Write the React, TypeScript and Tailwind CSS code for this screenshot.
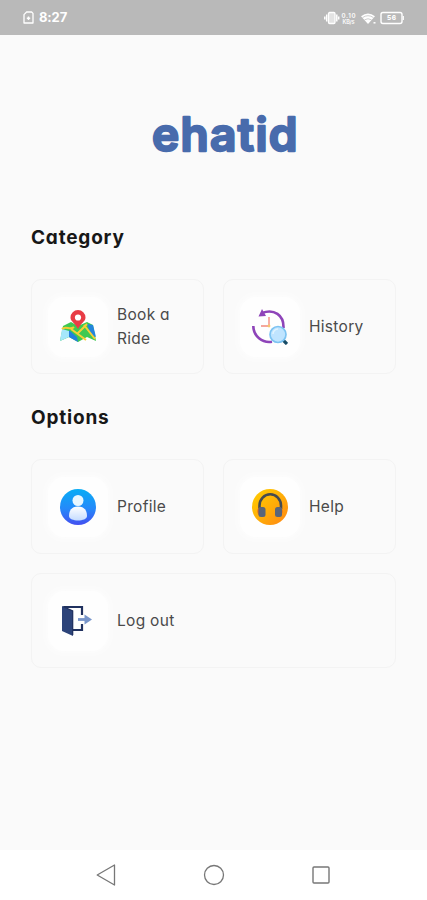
import type { ReactNode } from "react";

function StatusBar() {
  return (
    <header className="flex h-[35px] shrink-0 items-center justify-between bg-[#b9b9b9] pl-[23px] pr-[23px] text-white">
      <div className="flex items-center gap-[5px]">
        <svg width="11" height="13" viewBox="0 0 11 13" fill="none" stroke="currentColor" strokeWidth="1.3">
          <path d="M3.6 1H8.6L10 2.4V12H1V3.6Z" strokeLinejoin="round" />
          <path d="M3.8 7.2H7.2M5.5 5.5V8.9" strokeWidth="1.5" />
        </svg>
        <span className="text-[13px] font-bold leading-none tracking-[-0.1px]">8:27</span>
      </div>

      <div className="flex items-center">
        <svg width="80" height="16" viewBox="0 0 80 16" fill="none" stroke="currentColor">
          {/* Vibrate */}
          <rect x="4.5" y="2.5" width="6.500" height="11" rx="1.2" strokeWidth="1.3" fill="#fff" fillOpacity="0.6" />
          <path d="M2.700 4.500V11.500M.8 6.500V9.5M12.800 4.500V11.500M14.700 6.500V9.5" strokeWidth="1.5" />
          {/* Network speed */}
          <g fill="#fff" stroke="none" fontFamily="Inter, sans-serif" fontWeight="700" opacity=".9">
            <text x="17.5" y="7.5" fontSize="6" textLength="14">0.10</text>
            <text x="18.5" y="13.500" fontSize="5.500" textLength="12">KB/s</text>
          </g>
          {/* Wifi */}
          <path d="M37 6.2Q44 .8 51 6.2L44 14Z" fill="#fff" stroke="none" />
          <path d="M38.5 7.6Q44 3.8 49.5 7.6M40.5 9.8Q44 7.7 47.5 9.8" stroke="#b9b9b9" strokeWidth=".7" />
          <path d="M49.5 12.8H51.5" strokeWidth="1.5" />
          {/* Battery */}
          <rect x="57" y="2.500" width="21" height="11" rx="2" strokeWidth="1.4" />
          <path d="M79.3 6V10" strokeWidth="1.2" />
          <text x="63" y="10.4" fontSize="6.5" fontWeight="800" fontFamily="Inter, sans-serif" fill="#fff" stroke="none" textLength="9">56</text>
        </svg>
      </div>
    </header>
  );
}

function MapIcon() {
  return (
    <svg width="36" height="36" viewBox="0 0 36 36">
      <path d="M3 17 11 13 18 17 27 13 33 16 36 32 27 28 18 33 9 28 0 32Z" fill="#3ec951" />
      <path d="M2 20 9 22V28L0 32Z" fill="#a5e7fa" />
      <path d="M9 21 17 28 18 33 9 28Z" fill="#2380dc" />
      <path d="M27 15 33 16 36 28 31 26Z" fill="#2385dc" />
      <path d="M2 20C6 16 10 22 14 18" fill="none" stroke="#f4cb35" strokeWidth="2" />
      <path d="M11 20 26 31M24 16 35 30M17 25 27 15" fill="none" stroke="#f8cf36" strokeWidth="2" />
      <path d="M18 20C15 14 10.500 12.500 10.500 8.500A7.500 7.500 0 0 1 25.500 8.500C25.500 12.500 21 14 18 20Z" fill="#e83c45" />
      <circle cx="18" cy="8.500" r="3.100" fill="#fff" />
    </svg>
  );
}

function HistoryIcon() {
  return (
    <svg width="36" height="36" viewBox="0 0 36 36" fill="none">
      <path d="M1.300 17A16 16 0 0 0 20 32.700M10 4C22-.5 32 6 31.500 19" stroke="#8e44b9" strokeWidth="2.600" />
      <path d="M10 0 14 7 6.500 7.500Z" fill="#8e44b9" />
      <path d="M17 8V17H9" stroke="#f5a79d" strokeWidth="1.800" />
      <circle cx="17" cy="17" r="1.400" fill="#f7c66b" />
      <path d="M31 31 35 35" stroke="#174b66" strokeWidth="3.200" />
      <circle cx="26" cy="25.500" r="8" fill="#bfe4ff" stroke="#7cc3f2" strokeWidth="1.700" />
      <path d="M21 25A5 5 0 0 1 26 20" stroke="#e1f4ff" strokeWidth="1.500" />
    </svg>
  );
}

function ProfileIcon() {
  return (
    <svg width="36" height="36" viewBox="0 0 36 36">
      <defs>
        <linearGradient id="profileFill" x2="0" y2="1">
          <stop stopColor="#08adf5" />
          <stop offset=".55" stopColor="#2589fa" />
          <stop offset="1" stopColor="#434ff0" />
        </linearGradient>
        <linearGradient id="personFill" x2="0" y2="1">
          <stop stopColor="#fff" />
          <stop offset="1" stopColor="#c5dcff" />
        </linearGradient>
      </defs>
      <circle cx="18" cy="18" r="18" fill="url(#profileFill)" />
      <circle cx="18" cy="11.500" r="5.500" fill="#e8f7ff" />
      <path d="M9 27C9 20 13 17.500 18 17.500S27 20 27 27C27 33 9 33 9 27Z" fill="url(#personFill)" />
    </svg>
  );
}

function HelpIcon() {
  return (
    <svg width="36" height="36" viewBox="0 0 36 36">
      <defs>
        <linearGradient id="helpFill" x2="1" y2="1">
          <stop stopColor="#ffd000" />
          <stop offset=".5" stopColor="#ffae08" />
          <stop offset="1" stopColor="#ff8614" />
        </linearGradient>
      </defs>
      <circle cx="18" cy="18" r="18" fill="url(#helpFill)" />
      <path d="M7.500 20V16.500A10.500 11 0 0 1 29 16.500V20" fill="none" stroke="#454b50" strokeWidth="2.600" />
      <path d="M8 18.500C4 19 5 27 9 27Z" fill="#e46220" />
      <path d="M28 18.500C32 19 31 27 27 27Z" fill="#e46220" />
      <rect x="6.500" y="18" width="7" height="10" rx="2.500" fill="#59657a" />
      <rect x="23" y="18" width="7" height="10" rx="2.500" fill="#59657a" />
    </svg>
  );
}

function LogoutIcon() {
  return (
    <svg width="36" height="36" viewBox="0 0 36 36" fill="none">
      <path d="M4 4H22V12M22 21V27H13" stroke="#20315f" strokeWidth="2.200" />
      <path d="M2 3 13 8V33L2 28Z" fill="#2c4379" />
      <path d="M3 3.500 12.700 8V32" stroke="#20315f" strokeWidth="1.200" />
      <path d="M18 16.500H26" stroke="#7895ca" strokeWidth="2.800" />
      <path d="M24.500 11.500 32 16.500 24.500 21.500Z" fill="#7895ca" />
    </svg>
  );
}

interface MenuCardProps {
  icon: ReactNode;
  label: ReactNode;
  wide?: boolean;
}

function MenuCard({ icon, label, wide }: MenuCardProps) {
  return (
    <button
      className={`flex h-[95px] items-center rounded-[10px] border border-[#f3f3f3] bg-[#fafafa] pl-4 text-left ${wide ? "col-span-2" : ""}`}
    >
      <span className="flex size-[60px] shrink-0 items-center justify-center rounded-2xl bg-[#fefefe] shadow-[0_0_6px_2px_#fdfdfd]">
        {icon}
      </span>
      <span className="ml-[9px] text-[15.5px] leading-6 tracking-[0.3px] text-[#4a4a4a]">{label}</span>
    </button>
  );
}

function NavBar() {
  return (
    <nav className="flex h-[50px] shrink-0 items-center justify-between bg-white pl-[96px] pr-[97px]">
      <svg width="20" height="22" viewBox="0 0 20 22" fill="none" stroke="#777" strokeWidth="1.300" strokeLinejoin="round">
        <path d="M1.200 11 18.500 1V21Z" />
      </svg>
      <svg width="22" height="22" viewBox="0 0 22 22" fill="none" stroke="#777" strokeWidth="1.300">
        <circle cx="11" cy="11" r="9.500" />
      </svg>
      <svg width="18" height="18" viewBox="0 0 18 18" fill="none" stroke="#777" strokeWidth="1.400">
        <rect x="1" y="1" width="16" height="16" rx="1" />
      </svg>
    </nav>
  );
}

export default function App() {
  return (
    <div className="flex h-[900px] w-[427px] flex-col overflow-hidden bg-[#fafafa] font-['Inter',sans-serif] [font-feature-settings:'cv11'_1,'ss03'_1]">
      <StatusBar />

      <main className="flex flex-1 flex-col px-[31px] pt-[63px]">
        <svg className="ml-[115px]" width="160" height="74" viewBox="0 0 160 74">
          <text
            x="6"
            y="53"
            fill="#486bac"
            stroke="#486bac"
            strokeWidth="2.400"
            strokeLinejoin="round"
            fontFamily="Inter, sans-serif"
            fontSize="46"
            fontWeight="600"
            textLength="145.500"
            style={{ fontFeatureSettings: "normal" }}
          >
            ehatid
          </text>
        </svg>

        <h2 className="mt-[52px] text-[19px] font-bold leading-7 tracking-[0.8px] text-[#171717]">Category</h2>
        <div className="mt-[27px] grid grid-cols-2 gap-x-[19px]">
          <MenuCard icon={<MapIcon />} label={<>Book a<br />Ride</>} />
          <MenuCard icon={<HistoryIcon />} label="History" />
        </div>

        <h2 className="mt-[30px] text-[19px] font-bold leading-7 tracking-[0.8px] text-[#171717]">Options</h2>
        <div className="mt-[27px] grid grid-cols-2 gap-x-[19px] gap-y-[19px]">
          <MenuCard icon={<ProfileIcon />} label="Profile" />
          <MenuCard icon={<HelpIcon />} label="Help" />
          <MenuCard icon={<LogoutIcon />} label="Log out" wide />
        </div>
      </main>

      <NavBar />
    </div>
  );
}
